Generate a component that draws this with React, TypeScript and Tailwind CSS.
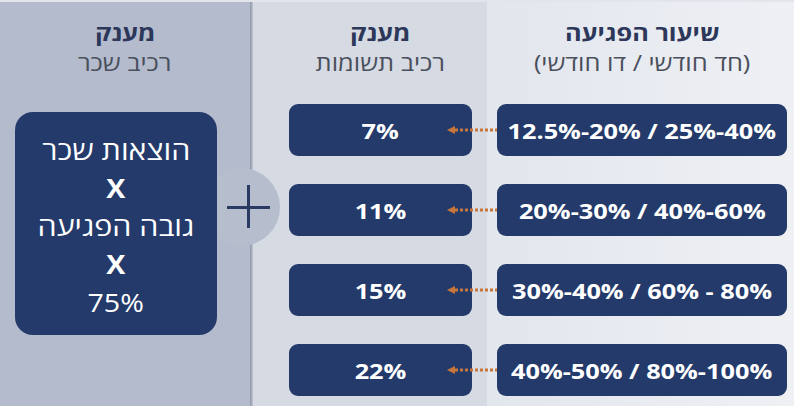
import React from "react";

const font = { fontFamily: '"Open Sans", "DejaVu Sans", sans-serif' };

const mid = ["7%", "11%", "15%", "22%"];
const right = [
  "12.5%-20% / 25%-40%",
  "20%-30% / 40%-60%",
  "30%-40% / 60% - 80%",
  "40%-50% / 80%-100%",
];

function Arrow() {
  return (
    <svg
      className="absolute left-[-50px] top-1/2 -translate-y-1/2"
      width="50"
      height="10"
      viewBox="0 0 50 10"
    >
      <polygon points="0,5 8,1 8,9" fill="#c8763c" />
      <line
        x1="8"
        y1="5"
        x2="50"
        y2="5"
        stroke="#c8763c"
        strokeWidth="3"
        strokeDasharray="3 2"
      />
    </svg>
  );
}

function Header({ title, sub }: { title: string; sub: string }) {
  return (
    <div dir="rtl" className="pt-[15px] flex flex-col items-center text-center">
      <div className="inline-block scale-x-[1.15] text-[22px] leading-[30px] font-bold text-[#2c375a]">
        {title}
      </div>
      <div className="inline-block scale-x-[1.15] text-[22px] leading-[30px] text-[#4a4f5c]">
        {sub}
      </div>
    </div>
  );
}

export default function App() {
  return (
    <div style={font} className="w-[794px] h-[406px] flex flex-col bg-[#e6e9ee] overflow-hidden">
      <div className="h-[2px] bg-[#e2e6ec]" />
      <div className="flex flex-1 relative">
        {/* left column */}
        <div className="w-[250px] bg-[#b3bbcc] flex flex-col">
          <Header title="מענק" sub="רכיב שכר" />
          <div className="ml-[15px] mt-[35px] w-[202px] h-[223px] rounded-[18px] bg-[#233a6a] relative z-10 flex flex-col items-center pt-[19px] text-white text-[26px] leading-[38px]">
            <div dir="rtl" className="inline-block scale-x-[1.17]">הוצאות שכר</div>
            <div className="inline-block scale-x-[1.1] font-bold">X</div>
            <div dir="rtl" className="inline-block scale-x-[1.17]">גובה הפגיעה</div>
            <div className="inline-block scale-x-[1.1] font-bold">X</div>
            <div className="inline-block scale-x-[1.1]">75%</div>
          </div>
        </div>
        {/* divider */}
        <div className="w-[3px] bg-gradient-to-r from-[#8c94a6] to-[#c3c8d3]" />
        {/* middle column */}
        <div className="w-[234px] bg-[#d5dae3] pl-[36px] pr-[15px] flex flex-col">
          <Header title="מענק" sub="רכיב תשומות" />
          <div className="mt-[27px] flex flex-col gap-[28px]">
            {mid.map((m) => (
              <div
                key={m}
                className="h-[52px] rounded-[9px] bg-[#233a6a] flex items-center justify-center text-white font-bold text-[22px]"
              >
                <span className="inline-block scale-x-[1.15]">{m}</span>
              </div>
            ))}
          </div>
        </div>
        {/* right column */}
        <div className="flex-1 bg-gradient-to-r from-[#e2e6ed] to-[#eef0f4] pl-[10px] pr-[7px] flex flex-col">
          <Header title="שיעור הפגיעה" sub="(חד חודשי / דו חודשי)" />
          <div className="mt-[27px] flex flex-col gap-[28px]">
            {right.map((r) => (
              <div
                key={r}
                className="relative h-[52px] rounded-[9px] bg-[#233a6a] flex items-center justify-center text-white font-bold text-[22px]"
              >
                <Arrow />
                <span className="inline-block scale-x-[1.15]">{r}</span>
              </div>
            ))}
          </div>
        </div>

        {/* plus bubble */}
        <div className="absolute left-[202px] top-[166px] w-[78px] h-[78px] rounded-full bg-[#b6bdcd]" />
        <div className="absolute left-[227px] top-[204px] w-[43px] h-[3px] bg-[#2a3a62]" />
        <div className="absolute left-[247px] top-[183px] w-[3px] h-[43px] bg-[#2a3a62]" />
      </div>
    </div>
  );
}
